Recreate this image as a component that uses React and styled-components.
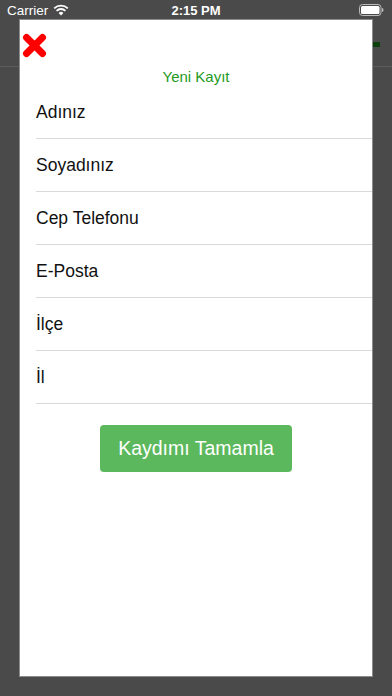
import React from "react";
import styled, { createGlobalStyle } from "styled-components";

const Global = createGlobalStyle`
  html, body { margin: 0; padding: 0; }
  body {
    background: #4a4a4a;
    font-family: "Liberation Sans", Arial, sans-serif;
    -webkit-font-smoothing: antialiased;
  }
`;

const Screen = styled.div`
  position: relative;
  width: 392px;
  height: 696px;
  background: #4a4a4a;
  overflow: hidden;
`;

const StatusBar = styled.div`
  height: 20px;
  display: grid;
  grid-template-columns: 1fr auto 1fr;
  align-items: center;
  padding: 0 7px;
  color: #fff;
  font-size: 13.5px;
`;

const StatusLeft = styled.div`
  display: flex;
  align-items: center;
  gap: 5px;
`;

const Time = styled.div`
  font-weight: 700;
  font-size: 13px;
`;

const StatusRight = styled.div`
  display: flex;
  justify-content: flex-end;
  padding-right: 1px;
`;

const PageHeader = styled.div`
  height: 46px;
  border-bottom: 1px solid #5c5c5c;
  display: flex;
  justify-content: flex-end;
  align-items: center;
  padding-right: 12px;
`;

const GreenMark = styled.div`
  width: 7px;
  height: 5px;
  background: #0b3f0b;
  margin-top: 3px;
`;

const Modal = styled.div`
  position: absolute;
  left: 20px;
  top: 20px;
  width: 352px;
  height: 656px;
  background: #fff;
  box-shadow: 0 0 0 1px #8c8c8c;
  display: flex;
  flex-direction: column;
`;

const CloseButton = styled.button`
  align-self: flex-start;
  margin: 13px 0 0 2px;
  padding: 0;
  border: none;
  background: none;
  width: 25px;
  height: 25px;
  display: block;
`;

const Title = styled.div`
  margin-top: 10px;
  height: 18px;
  line-height: 18px;
  text-align: center;
  color: #1f9a1f;
  font-size: 15px;
`;

const Fields = styled.div`
  margin-left: 16px;
  display: flex;
  flex-direction: column;
`;

const Field = styled.div`
  height: 52px;
  border-bottom: 1px solid #d9d9d9;
  display: flex;
  align-items: center;
  font-size: 17.5px;
  color: #111;
`;

const Submit = styled.button`
  align-self: center;
  margin-top: 21px;
  width: 192px;
  height: 47px;
  border: none;
  border-radius: 4px;
  background: #5cb85c;
  color: #fff;
  font-family: "Liberation Sans", Arial, sans-serif;
  font-size: 19.5px;
  padding: 0;
`;

const Wifi = () => (
  <svg width="16" height="12" viewBox="0 0 16 12">
    <path d="M8 11.5 L5.6 8.9 A3.4 3.4 0 0 1 10.4 8.9 Z" fill="#fff" />
    <path d="M3.6 6.8 A6.3 6.3 0 0 1 12.4 6.8" stroke="#fff" strokeWidth="1.8" fill="none" />
    <path d="M1.2 4.3 A9.8 9.8 0 0 1 14.8 4.3" stroke="#fff" strokeWidth="1.8" fill="none" />
  </svg>
);

const Battery = () => (
  <svg width="25" height="12" viewBox="0 0 25 12">
    <rect x="0.5" y="0.5" width="21.5" height="11" rx="3" fill="none" stroke="#bbb" strokeWidth="1" />
    <rect x="2" y="2" width="18.5" height="8" rx="1.5" fill="#fff" />
    <path d="M23 4 Q24.5 4 24.5 6 Q24.5 8 23 8 Z" fill="#bbb" />
  </svg>
);

const CloseIcon = () => (
  <svg width="25" height="25" viewBox="0 0 25 25">
    <path d="M4.5 4.5 L20.5 20.5 M20.5 4.5 L4.5 20.5" stroke="#ff0000" strokeWidth="7" strokeLinecap="round" />
  </svg>
);

const fields = ["Adınız", "Soyadınız", "Cep Telefonu", "E-Posta", "İlçe", "İl"];

export default function App() {
  return (
    <Screen>
      <Global />
      <StatusBar>
        <StatusLeft>
          <span>Carrier</span>
          <Wifi />
        </StatusLeft>
        <Time>2:15 PM</Time>
        <StatusRight>
          <Battery />
        </StatusRight>
      </StatusBar>
      <PageHeader>
        <GreenMark />
      </PageHeader>
      <Modal>
        <CloseButton aria-label="Kapat">
          <CloseIcon />
        </CloseButton>
        <Title>Yeni Kayıt</Title>
        <Fields>
          {fields.map((f) => (
            <Field key={f}>{f}</Field>
          ))}
        </Fields>
        <Submit>Kaydımı Tamamla</Submit>
      </Modal>
    </Screen>
  );
}
